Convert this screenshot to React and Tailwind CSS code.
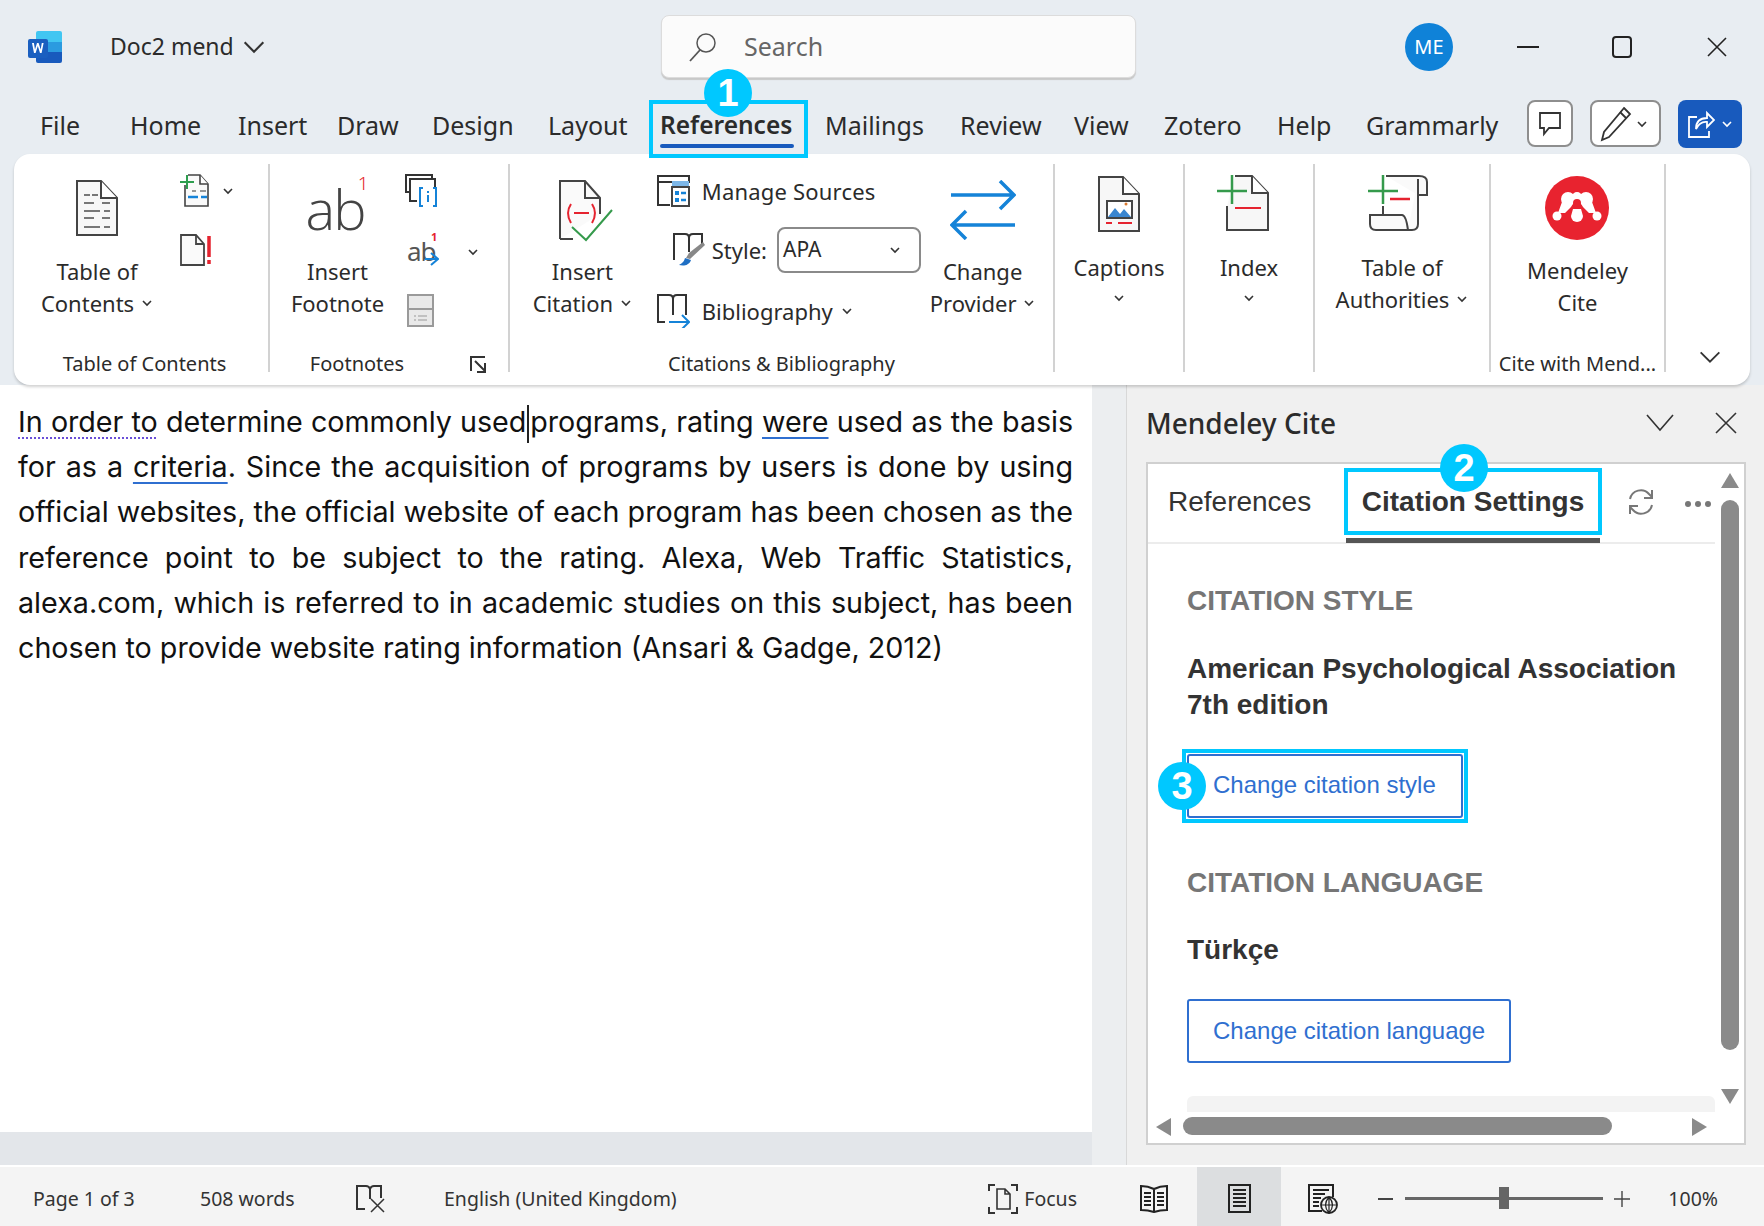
import { Fragment } from "react";

const UI = "font-['Noto_Sans','Open_Sans',sans-serif]";
const ARIAL = "font-['Liberation_Sans',Arial,sans-serif]";

const tabs = [
  { label: "File", w: "w-[90px]" },
  { label: "Home", w: "w-[108px]" },
  { label: "Insert", w: "w-[99px]" },
  { label: "Draw", w: "w-[95px]" },
  { label: "Design", w: "w-[116px]" },
  { label: "Layout", w: "w-[112px]" },
  { label: "References", w: "w-[165px]", active: true },
  { label: "Mailings", w: "w-[135px]" },
  { label: "Review", w: "w-[114px]" },
  { label: "View", w: "w-[90px]" },
  { label: "Zotero", w: "w-[113px]" },
  { label: "Help", w: "w-[89px]" },
  { label: "Grammarly", w: "w-[150px]" },
];

const docLines = [
  <Fragment key="2">for as a <span className="underline decoration-[#2f6fd0] decoration-2 underline-offset-[5px]">criteria</span>. Since the acquisition of programs by users is done by using</Fragment>,
  "official websites, the official website of each program has been chosen as the",
  "reference point to be subject to the rating. Alexa, Web Traffic Statistics,",
  "alexa.com, which is referred to in academic studies on this subject, has been",
];

const Chevron = ({ size = 12, className = "", color = "#333", weight = 1.6 }) => (
  <svg width={size} height={size} viewBox="0 0 12 12" className={className}>
    <path d="M2 4l4 4 4-4" fill="none" stroke={color} strokeWidth={weight} />
  </svg>
);

const Badge = ({ n, className }) => (
  <div className={`absolute w-[48px] h-[48px] rounded-full bg-[#00c8ff] text-white font-bold text-[38px] leading-[48px] text-center z-20 ${ARIAL} ${className}`}>
    {n}
  </div>
);

const WordIcon = () => (
  <svg width="34" height="32" viewBox="0 0 34 32">
    <path d="M8 2a2 2 0 012-2h22a2 2 0 012 2v9H8z" fill="#41c6f2" />
    <rect x="8" y="11" width="26" height="10" fill="#2b9be0" />
    <path d="M8 21h26v9a2 2 0 01-2 2H10a2 2 0 01-2-2z" fill="#185abd" />
    <rect x="0" y="8" width="20" height="19" rx="2" fill="#1a5fc0" />
    <path d="M4 12l2 10h1.6l2.2-7 2.2 7h1.6l2-10h-1.8l-1.1 6.5L10.600 12H9l-2 6.500L5.900 12z" fill="#fff" />
  </svg>
);

const TocIcon = () => (
  <svg width="42" height="56" viewBox="0 0 42 56">
    <path d="M1 1h24l16 17v37H1z" fill="#f7f7f7" stroke="#444" strokeWidth="2" />
    <path d="M25 1v17h16" fill="#fff" stroke="#444" strokeWidth="2" />
    <path d="M8 15h6M16 15h6M8 23h10M26 23h8M8 31h16M28 31h6M8 38h10M26 38h8M8 47h16M28 47h6" stroke="#777" strokeWidth="2" />
  </svg>
);

const AddTextIcon = () => (
  <svg width="30" height="33" viewBox="0 0 30 33">
    <path d="M8 1h12l8 9v22H5V11" fill="#fafafa" stroke="#444" strokeWidth="1.600" />
    <path d="M20 1v9h8" fill="#fff" stroke="#444" strokeWidth="1.600" />
    <path d="M0 8h14M7 1v14" stroke="#2e9e4f" strokeWidth="2" />
    <path d="M8 23h10M21 23h6" stroke="#1583d8" strokeWidth="2.500" />
    <path d="M12 17h4M20 17h6" stroke="#777" strokeWidth="1.500" />
  </svg>
);

const UpdateIcon = () => (
  <svg width="33" height="32" viewBox="0 0 33 32">
    <path d="M1 1h15l8 9v21H1z" fill="#fafafa" stroke="#444" strokeWidth="1.800" />
    <path d="M16 1v9h8" fill="none" stroke="#444" strokeWidth="1.800" />
    <path d="M29 2v21M29 26v4" stroke="#e5232f" strokeWidth="3.500" />
  </svg>
);

const AbIcon = () => (
  <div className="relative w-[64px] h-[60px]">
    <span className="absolute left-0 top-[-2px] text-[56px] leading-[60px] font-light text-[#444] font-['Open_Sans',sans-serif] tracking-[-2px]">ab</span>
    <span className="absolute right-[1px] top-[-8px] text-[19px] leading-[22px] text-[#e5232f] font-light">1</span>
  </div>
);

const EndnoteIcon = () => (
  <svg width="34" height="33" viewBox="0 0 34 33">
    <path d="M6 18H1V1h26v4" fill="none" stroke="#333" strokeWidth="2" />
    <path d="M12 27H5V5h25v8" fill="none" stroke="#333" strokeWidth="2" />
    <path d="M18 14h-3v18h3M28 14h3v18h-3" fill="none" stroke="#1583d8" strokeWidth="2" />
    <path d="M23 17v2M23 21v7" stroke="#1583d8" strokeWidth="2" />
  </svg>
);

const NextFootnoteIcon = () => (
  <div className="relative w-[32px] h-[36px]">
    <span className="absolute left-0 top-[4px] text-[26px] leading-[26px] text-[#555] tracking-[-1px]">ab</span>
    <span className="absolute left-[24px] top-[-3px] text-[11px] leading-[12px] font-bold text-[#e5232f]">1</span>
    <svg className="absolute left-[18px] top-[17px]" width="14" height="16" viewBox="0 0 14 16">
      <path d="M0 8h13M6 2l7 6-7 6" fill="none" stroke="#1583d8" strokeWidth="2" />
    </svg>
  </div>
);

const ShowNotesIcon = () => (
  <svg width="27" height="33" viewBox="0 0 27 33">
    <rect x="1" y="1" width="25" height="31" fill="#e9e9e9" stroke="#9a9a9a" strokeWidth="2" />
    <path d="M1 15h25" stroke="#9a9a9a" strokeWidth="2" />
    <path d="M7 22h2M11 22h9M7 26h2M11 26h9" stroke="#9a9a9a" strokeWidth="1.200" />
  </svg>
);

const CitationIcon = () => (
  <svg width="56" height="62" viewBox="0 0 56 62" className="ml-[9px]">
    <path d="M1 59V1h25l15 17v16" fill="#fafafa" stroke="#444" strokeWidth="2" />
    <path d="M1 59h13" stroke="#444" strokeWidth="2" />
    <path d="M26 1v17h15" fill="none" stroke="#444" strokeWidth="2" />
    <path d="M12 24q-6 9 0 19M33 24q6 9 0 19M15 33h15" fill="none" stroke="#e5232f" strokeWidth="2" />
    <path d="M13 47l14 13 26-30" fill="none" stroke="#359a4c" strokeWidth="2" />
  </svg>
);

const SourcesIcon = () => (
  <svg width="33" height="32" viewBox="0 0 33 32">
    <path d="M13 30H1V1h31v7" fill="none" stroke="#333" strokeWidth="2" />
    <path d="M1 7h14" stroke="#333" strokeWidth="2" />
    <rect x="15" y="6" width="17" height="6" fill="#7db7e8" />
    <rect x="15" y="12" width="17" height="19" fill="#fff" stroke="#444" strokeWidth="2" />
    <path d="M18 16h4v4h-4zM18 23h4v4h-4z" fill="#1583d8" />
    <path d="M24 18h5M24 25h5" stroke="#1583d8" strokeWidth="2.500" />
  </svg>
);

const StyleIcon = () => (
  <svg width="33" height="34" viewBox="0 0 33 34">
    <path d="M1 27V1h11q4 0 4 4v14M16 5q0-4 4-4h9v12" fill="none" stroke="#333" strokeWidth="2" />
    <path d="M32 12L17 26l-4-1 3-5 14-11z" fill="#888" />
    <path d="M12 25c-1 4-3 5-6 7 4 1 10 1 12-5z" fill="#1f6fc4" />
  </svg>
);

const BibIcon = () => (
  <svg width="33" height="34" viewBox="0 0 33 34">
    <path d="M8 28H1V1h11q4 0 4 4v16M16 5q0-4 4-4h9v20" fill="none" stroke="#333" strokeWidth="2" />
    <path d="M12 28h20M25 21l7 7-7 7" fill="none" stroke="#1583d8" strokeWidth="2" />
  </svg>
);

const ProviderIcon = () => (
  <svg width="66" height="60" viewBox="0 0 66 60">
    <path d="M1 15h62M50 1l14 14-14 14M65 45H3M16 31L2 45l14 14" fill="none" stroke="#1583d8" strokeWidth="3.500" />
  </svg>
);

const CaptionIcon = () => (
  <svg width="42" height="56" viewBox="0 0 42 56">
    <path d="M1 1h24l16 17v37H1z" fill="#f7f7f7" stroke="#444" strokeWidth="2" />
    <path d="M25 1v17h16" fill="#fff" stroke="#444" strokeWidth="2" />
    <rect x="9" y="25" width="25" height="17" fill="#fff" stroke="#444" strokeWidth="2" />
    <path d="M10 41l7-9 5 6 4-5 7 8z" fill="#3a86d0" />
    <circle cx="28" cy="28" r="1.500" fill="#d9782e" />
    <path d="M8 47h6M20 47h14" stroke="#e5232f" strokeWidth="2" />
  </svg>
);

const IndexIcon = () => (
  <svg width="52" height="60" viewBox="0 0 52 60" className="mr-[12px]">
    <path d="M10 35v24h41V22L35 5H18" fill="#f7f7f7" stroke="#444" strokeWidth="2" />
    <path d="M35 5v17h16" fill="#fff" stroke="#444" strokeWidth="2" />
    <path d="M0 20h30M15 4v29" stroke="#359a4c" strokeWidth="2.500" />
    <path d="M18 37h26" stroke="#e5232f" strokeWidth="2" />
  </svg>
);

const AuthIcon = () => (
  <svg width="60" height="60" viewBox="0 0 60 60" className="mr-[9px]">
    <path d="M18 5h33q8 0 8 6v13h-9M50 8v45q0 6-6 6H8q-6 0-6-6v-9h32q4 0 6 15M15 35v9" fill="#fafafa" stroke="#444" strokeWidth="2" />
    <path d="M0 20h30M15 4v29" stroke="#359a4c" strokeWidth="2.500" />
    <path d="M22 28h20" stroke="#e5232f" strokeWidth="2.500" />
  </svg>
);

const MendeleyIcon = () => (
  <svg width="64" height="64" viewBox="0 0 64 64">
    <circle cx="32" cy="32" r="32" fill="#e8232f" />
    <g fill="#fff">
      <circle cx="23" cy="23" r="7" />
      <circle cx="41" cy="23" r="7" />
      <circle cx="32" cy="21" r="5" />
      <path d="M17 26l-4 11h7l6-6 3-5-9-6zM47 26l4 11h-7l-6-6-3-5 9-6z" />
      <circle cx="12" cy="40" r="4.500" />
      <circle cx="52" cy="40" r="4.500" />
      <path d="M28 33h8l2 7a6 6 0 01-12 0z" />
    </g>
    <circle cx="32" cy="27" r="4" fill="#e8232f" />
  </svg>
);

const Big = ({ lines, icon, iconBox = "h-[91px] pt-[16px]", chev, arrowBelow }) => (
  <div className="flex flex-col items-center">
    <div className={`${iconBox} flex items-start justify-center`}>{icon}</div>
    {lines.map((l, i) => (
      <div key={l} className="h-[32px] text-[22px] leading-[32px] flex items-center gap-[7px] whitespace-nowrap">
        {l}
        {chev && i === lines.length - 1 && <Chevron />}
      </div>
    ))}
    {arrowBelow && <Chevron className="mt-[9px]" />}
  </div>
);

const GroupLabel = ({ children, className = "" }) => (
  <div className={`absolute left-0 right-0 top-[188px] h-[24px] leading-[24px] text-[20px] text-center whitespace-nowrap ${className}`}>
    {children}
  </div>
);

const Group = ({ w, children }) => (
  <div className={`relative h-[208px] shrink-0 border-r-2 border-[#d2d2d2] ${w}`}>{children}</div>
);

const Ribbon = () => (
  <div className="mx-[14px] h-[231px] rounded-[16px] bg-white shadow-[0_2px_3px_rgba(0,0,0,0.18)] flex pt-[10px] text-[#2b2b2b] relative z-10 shrink-0">
    <Group w="w-[256px]">
      <div className="flex">
        <div className="w-[166px] flex justify-center">
          <Big icon={<TocIcon />} lines={["Table of", "Contents"]} chev />
        </div>
        <div className="flex flex-col pt-[10px]">
          <div className="flex items-center h-[33px] w-[66px]">
            <AddTextIcon />
            <Chevron className="ml-[12px]" />
          </div>
          <div className="mt-[27px]"><UpdateIcon /></div>
        </div>
      </div>
      <GroupLabel className="pl-[7px]">Table of Contents</GroupLabel>
    </Group>
    <Group w="w-[240px]">
      <div className="flex">
        <div className="w-[135px] flex justify-center">
          <Big icon={<AbIcon />} lines={["Insert", "Footnote"]} />
        </div>
        <div className="flex flex-col pt-[10px]">
          <EndnoteIcon />
          <div className="flex items-center mt-[27px] ml-[2px] h-[36px]">
            <NextFootnoteIcon />
            <Chevron className="ml-[28px]" />
          </div>
          <div className="mt-[24px] ml-[2px]"><ShowNotesIcon /></div>
        </div>
      </div>
      <GroupLabel className="pr-[64px]">Footnotes</GroupLabel>
      <svg className="absolute left-[200px] top-[192px]" width="17" height="17" viewBox="0 0 17 17">
        <path d="M1 15V1h14" fill="none" stroke="#333" strokeWidth="2" />
        <path d="M5 5l10 10M15 7v9H7" fill="none" stroke="#333" strokeWidth="2" />
      </svg>
    </Group>
    <Group w="w-[545px]">
      <div className="flex">
        <div className="w-[145px] flex justify-center">
          <Big icon={<CitationIcon />} lines={["Insert", "Citation"]} chev />
        </div>
        <div className="flex flex-col w-[270px] pt-[11px]">
          <div className="flex items-center gap-[12px] h-[32px] pl-[2px] text-[22px]">
            <SourcesIcon />
            <span className="tracking-[0.2px]">Manage Sources</span>
          </div>
          <div className="flex items-center h-[46px] mt-[20px] text-[22px] pl-[18px]">
            <StyleIcon />
            <span className="ml-[6px] mr-[10px]">Style:</span>
            <div className="w-[144px] h-[46px] rounded-[8px] border-2 border-[#8a8a8a] flex items-center justify-between pl-[4px] pr-[18px] text-[21px] shrink-0">
              APA
              <Chevron />
            </div>
          </div>
          <div className="flex items-center gap-[12px] h-[34px] mt-[21px] pl-[2px] text-[22px]">
            <BibIcon />
            Bibliography
            <Chevron className="ml-[-4px]" />
          </div>
        </div>
        <div className="w-[129px] pr-[12px] flex justify-center">
          <Big icon={<ProviderIcon />} lines={["Change", "Provider"]} chev />
        </div>
      </div>
      <GroupLabel>Citations &amp; Bibliography</GroupLabel>
    </Group>
    <Group w="w-[130px]">
      <div className="flex justify-center">
        <Big icon={<CaptionIcon />} iconBox="h-[87px] pt-[12px]" lines={["Captions"]} arrowBelow />
      </div>
    </Group>
    <Group w="w-[130px]">
      <div className="flex justify-center">
        <Big icon={<IndexIcon />} iconBox="h-[87px] pt-[7px]" lines={["Index"]} arrowBelow />
      </div>
    </Group>
    <Group w="w-[176px]">
      <div className="flex justify-center">
        <Big icon={<AuthIcon />} iconBox="h-[87px] pt-[7px]" lines={["Table of", "Authorities"]} chev />
      </div>
    </Group>
    <Group w="w-[175px]">
      <div className="flex justify-center">
        <Big icon={<MendeleyIcon />} iconBox="h-[90px] pt-[12px]" lines={["Mendeley", "Cite"]} />
      </div>
      <GroupLabel>Cite with Mend...</GroupLabel>
    </Group>
    <div className="flex-1 relative">
      <Chevron size={28} weight={0.8} className="absolute left-[30px] top-[179px]" />
    </div>
  </div>
);

const TitleBar = () => (
  <div className="h-[90px] pt-[3px] flex items-center shrink-0 relative">
    <div className="ml-[28px]"><WordIcon /></div>
    <div className="ml-[48px] text-[23px] text-[#2b2b2b] flex items-center gap-[6px]">
      Doc2 mend
      <Chevron size={28} weight={0.9} />
    </div>
    <div className="absolute left-[661px] top-[15px] w-[475px] h-[63px] rounded-[8px] bg-[#fbfbfb] border border-[#dcdcdc] shadow-[0_2px_1px_#c8c8c8] flex items-center pl-[26px]">
      <svg width="30" height="30" viewBox="0 0 30 30">
        <circle cx="18" cy="11" r="9" fill="none" stroke="#555" strokeWidth="1.500" />
        <path d="M12 18L2 29" stroke="#555" strokeWidth="1.800" />
      </svg>
      <span className="ml-[26px] text-[25px] text-[#666]">Search</span>
    </div>
    <div className="ml-auto flex items-center">
      <div className="w-[48px] h-[48px] rounded-full bg-[#0f82d8] text-white text-[20px] flex items-center justify-center">ME</div>
      <svg className="ml-[64px]" width="22" height="4" viewBox="0 0 22 4"><path d="M0 2h22" stroke="#222" strokeWidth="2" /></svg>
      <svg className="ml-[72px]" width="22" height="22" viewBox="0 0 22 22"><rect x="2" y="1" width="18" height="20" rx="3" fill="none" stroke="#222" strokeWidth="2" /></svg>
      <svg className="ml-[74px] mr-[37px]" width="20" height="20" viewBox="0 0 20 20"><path d="M1 1l18 18M19 1L1 19" stroke="#222" strokeWidth="1.600" /></svg>
    </div>
  </div>
);

const TabRow = () => (
  <div className="h-[64px] pl-[40px] flex shrink-0 text-[#2b2b2b] relative">
    {tabs.map((t) => (
      <div key={t.label} className={`${t.w} leading-[70px] whitespace-nowrap relative ${t.active ? "font-semibold text-[24.5px]" : "text-[25px]"}`}>
        {t.label}
        {t.active && (
          <>
            <div className="absolute left-[-11px] top-[10px] w-[159px] h-[58px] border-[4px] border-[#00c8ff] z-20" />
            <div className="absolute left-0 top-[54px] w-[134px] h-[4px] rounded-full bg-[#185abd] z-20" />
            <Badge n="1" className="left-[44px] top-[-21px]" />
          </>
        )}
      </div>
    ))}
    <div className="flex items-start gap-[17px] pt-[10px] pr-[22px] absolute right-0 top-0">
      <div className="w-[46px] h-[47px] rounded-[8px] border-2 border-[#8e8e8e] bg-white flex items-center justify-center">
        <svg width="24" height="26" viewBox="0 0 24 26">
          <path d="M2 2h20v15H11l-5 6v-6H2z" fill="none" stroke="#333" strokeWidth="1.800" />
        </svg>
      </div>
      <div className="w-[71px] h-[47px] rounded-[8px] border-2 border-[#8e8e8e] bg-white flex items-center pl-[8px] gap-[4px]">
        <svg width="32" height="36" viewBox="0 0 32 36">
          <path d="M24 2l6 6L9 31l-7 3 2-8z" fill="#fff" stroke="#333" strokeWidth="1.800" />
          <path d="M20 6l6 6" stroke="#333" strokeWidth="1.800" />
        </svg>
        <Chevron />
      </div>
      <div className="w-[64px] h-[48px] rounded-[8px] bg-[#185abd] flex items-center pl-[9px] gap-[6px]">
        <svg width="28" height="30" viewBox="0 0 28 30">
          <path d="M10 8H2v20h20v-6" fill="none" stroke="#fff" strokeWidth="1.800" />
          <path d="M9 20q0-11 11-11V4l7 7-7 7v-5q-7-1-11 7z" fill="#185abd" stroke="#fff" strokeWidth="1.800" />
        </svg>
        <Chevron color="#fff" />
      </div>
    </div>
  </div>
);

const Doc = () => (
  <div className="w-[1092px] flex flex-col shrink-0">
    <div className="flex-1 bg-white pt-[14px] pl-[18px] pr-[19px] text-[28.7px] leading-[45.2px] text-[#111] font-['Inter',sans-serif]">
      <div className="[text-align-last:justify] whitespace-nowrap tracking-[-0.06px]">
        <span className="underline decoration-dotted decoration-[#6a4fd8] decoration-2 underline-offset-[5px]">In order to</span> determine commonly used<span className="inline-block w-[2px] h-[38px] bg-[#222] align-middle mx-[1px]" />programs, rating <span className="underline decoration-[#2f6fd0] decoration-2 underline-offset-[5px]">were</span> used as the basis
      </div>
      {docLines.map((l, i) => (
        <div key={i} className="[text-align-last:justify] whitespace-nowrap">{l}</div>
      ))}
      <div className="whitespace-nowrap">chosen to provide website rating information (Ansari &amp; Gadge, 2012)</div>
    </div>
    <div className="h-[33px] bg-[#e3e6ea]" />
  </div>
);

const Field = ({ children, className = "" }) => (
  <div className={`text-[28px] leading-[36px] font-bold text-[#767676] ${className}`}>{children}</div>
);

const Pane = () => (
  <div className="flex-1 flex">
    <div className="w-[35px] bg-[#eceef0] border-r border-[#d8d8d8]" />
    <div className="flex-1 bg-[#f0f0f0] pl-[19px] pr-[18px] flex flex-col relative">
      <div className="h-[76px] mb-px flex items-center">
        <span className="text-[28px] font-medium text-[#2b2b2b]">Mendeley Cite</span>
        <svg className="ml-auto" width="28" height="20" viewBox="0 0 28 20"><path d="M1 2l13 15L27 2" fill="none" stroke="#333" strokeWidth="1.600" /></svg>
        <svg className="ml-[41px] mr-[9px]" width="22" height="22" viewBox="0 0 22 22"><path d="M1 1l20 20M21 1L1 21" stroke="#333" strokeWidth="1.600" /></svg>
      </div>
      <div className={`h-[683px] w-[600px] border-2 border-[#d0d0d0] bg-white relative flex ${ARIAL}`}>
        <div className="w-[567px] shrink-0 flex flex-col">
          <div className="h-[80px] border-b-2 border-[#ececec] flex relative shrink-0">
            <div className="pl-[20px] pt-[20px] text-[28px] leading-[36px] text-[#333]">References</div>
            <div className="absolute left-[196px] top-[4px] w-[258px] h-[67px] border-[4px] border-[#00c8ff] flex items-center justify-center text-[28px] font-bold text-[#333]">
              Citation Settings
              <Badge n="2" className="left-[92px] top-[-28px]" />
            </div>
            <div className="absolute left-[198px] top-[74px] w-[254px] h-[5px] bg-[#555]" />
            <svg className="absolute left-[479px] top-[24px]" width="28" height="28" viewBox="0 0 28 28">
              <path d="M3 11a11 11 0 0119-5l3 3M25 17a11 11 0 01-19 5l-3-3" fill="none" stroke="#777" strokeWidth="2" />
              <path d="M25 2v8h-8M3 26v-8h8" fill="none" stroke="#777" strokeWidth="2" />
            </svg>
            <div className="absolute left-[537px] top-[37px] flex gap-[4px]">
              <span className="w-[6px] h-[6px] rounded-full bg-[#777]" />
              <span className="w-[6px] h-[6px] rounded-full bg-[#777]" />
              <span className="w-[6px] h-[6px] rounded-full bg-[#777]" />
            </div>
          </div>
          <div className="flex-1 pl-[39px] pt-[39px] relative">
            <Field>CITATION STYLE</Field>
            <div className="mt-[32px] text-[28px] leading-[36px] font-bold text-[#333] whitespace-nowrap">
              American Psychological Association<br />7th edition
            </div>
            <div className="relative mt-[26px] w-[286px] h-[74px] ml-[-5px] border-[4px] border-[#00c8ff] p-px">
              <div className="h-full rounded-[3px] border-2 border-[#2f6fd0] flex items-center pl-[24px] pb-[2px] text-[24px] text-[#2f6fd0]">Change citation style</div>
              <Badge n="3" className="left-[-28px] top-[9px]" />
            </div>
            <Field className="mt-[42px]">CITATION LANGUAGE</Field>
            <div className="mt-[31px] text-[28px] leading-[36px] font-bold text-[#333]">Türkçe</div>
            <div className="mt-[31px] w-[324px] h-[64px] rounded-[3px] border-2 border-[#2f6fd0] flex items-center pl-[24px] text-[24px] text-[#2f6fd0]">Change citation language</div>
            <div className="absolute left-[39px] right-0 top-[552px] h-[16px] rounded-t-[6px] bg-[#f3f3f3]" />
          </div>
          <div className="h-[31px] shrink-0" />
        </div>
        <div className="w-[29px] relative">
          <svg className="absolute left-[6px] top-[9px]" width="18" height="15" viewBox="0 0 18 15"><path d="M9 0l9 15H0z" fill="#8a8a8a" /></svg>
          <div className="absolute left-[6px] top-[36px] w-[18px] h-[550px] rounded-full bg-[#8a8a8a]" />
          <svg className="absolute left-[6px] top-[625px]" width="18" height="15" viewBox="0 0 18 15"><path d="M9 15L18 0H0z" fill="#8a8a8a" /></svg>
        </div>
        <div className="absolute left-0 right-0 bottom-0 h-[31px]">
          <svg className="absolute left-[8px] top-[6px]" width="15" height="18" viewBox="0 0 15 18"><path d="M0 9l15-9v18z" fill="#8a8a8a" /></svg>
          <div className="absolute left-[35px] top-[5px] w-[429px] h-[18px] rounded-full bg-[#8a8a8a]" />
          <svg className="absolute left-[544px] top-[6px]" width="15" height="18" viewBox="0 0 15 18"><path d="M15 9L0 0v18z" fill="#8a8a8a" /></svg>
        </div>
      </div>
    </div>
  </div>
);

const StatusBar = () => (
  <div className="h-[61px] border-t-2 border-white bg-[#f4f4f4] pt-[4px] flex items-center text-[19.5px] text-[#333] shrink-0 relative z-10">
    <span className="ml-[33px] w-[167px]">Page 1 of 3</span>
    <span className="w-[156px]">508 words</span>
    <svg width="30" height="28" viewBox="0 0 30 28">
      <path d="M9 24H1V1h9q3 0 4 3 1-3 4-3h7v12M14 4v10" fill="none" stroke="#333" strokeWidth="2" />
      <path d="M15 14l13 13M28 14L15 27" stroke="#333" strokeWidth="1.500" />
    </svg>
    <span className="ml-[58px]">English (United Kingdom)</span>
    <div className="ml-auto flex items-center h-full">
      <svg width="30" height="30" viewBox="0 0 30 30">
        <path d="M1 7V1h6M23 1h6v6M29 23v6h-6M7 29H1v-6" fill="none" stroke="#333" strokeWidth="2" />
        <path d="M9 5h8l5 5v15H9z M17 5v5h5" fill="none" stroke="#333" strokeWidth="1.600" />
      </svg>
      <span className="ml-[6px] w-[116px]">Focus</span>
      <svg width="28" height="30" viewBox="0 0 28 30">
        <path d="M14 5Q8 2 1 2v24q7 0 13 2 6-2 13-2V2q-7 0-13 3zM14 5v23" fill="none" stroke="#222" strokeWidth="2" />
        <path d="M4 9h7M4 13h7M4 17h7M4 21h7M17 9h7M17 13h7M17 17h7M17 21h7" stroke="#222" strokeWidth="2" />
      </svg>
      <div className="ml-[29px] w-[84px] h-[59px] mt-[-4px] bg-[#dcdee0] flex items-center justify-center pt-[4px]">
        <svg width="23" height="29" viewBox="0 0 23 29">
          <rect x="1" y="1" width="21" height="27" fill="none" stroke="#222" strokeWidth="2" />
          <path d="M5 6h13M5 10h13M5 14h13M5 18h13M5 22h13" stroke="#222" strokeWidth="2" />
        </svg>
      </div>
      <svg className="ml-[27px]" width="30" height="30" viewBox="0 0 30 30">
        <path d="M14 27H1V1h24v12" fill="none" stroke="#222" strokeWidth="2" />
        <path d="M5 6h16M5 10h12M5 14h8M5 18h6M5 22h6" stroke="#222" strokeWidth="2" />
        <circle cx="21" cy="21" r="8" fill="#f4f4f4" stroke="#222" strokeWidth="1.800" />
        <path d="M13 21h16M21 13v16M21 13q-7 8 0 16M21 13q7 8 0 16" fill="none" stroke="#222" strokeWidth="1.200" />
      </svg>
      <div className="ml-[40px] w-[15px] h-[2px] bg-[#444]" />
      <div className="ml-[12px] w-[198px] h-[3px] bg-[#666] relative">
        <div className="absolute left-[94px] top-[-10px] w-[10px] h-[22px] bg-[#666]" />
      </div>
      <svg className="ml-[11px]" width="16" height="16" viewBox="0 0 16 16"><path d="M0 8h16M8 0v16" stroke="#444" strokeWidth="1.400" /></svg>
      <span className="ml-[38px] mr-[46px]">100%</span>
    </div>
  </div>
);

const App = () => {
  return (
    <div className={`w-[1764px] h-[1226px] bg-[#e8edf2] flex flex-col overflow-hidden ${UI}`}>
      <TitleBar />
      <TabRow />
      <Ribbon />
      <div className="flex-1 flex min-h-0">
        <Doc />
        <Pane />
      </div>
      <StatusBar />
    </div>
  );
};

export default App;
